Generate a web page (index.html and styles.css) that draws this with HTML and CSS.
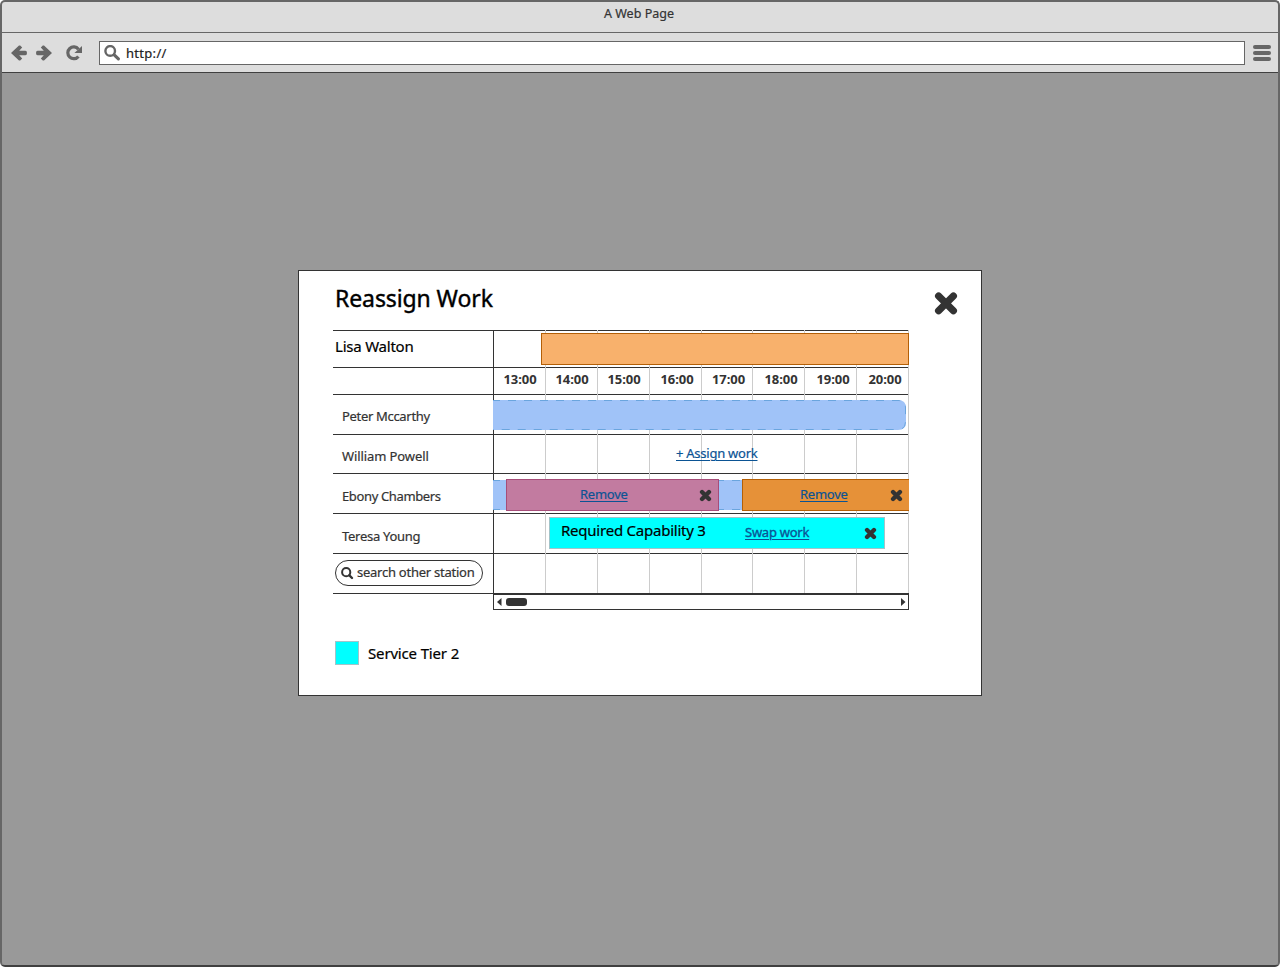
FILE: index.html
```html
<!DOCTYPE html>
<html lang="en">
<head>
<meta charset="utf-8">
<title>A Web Page</title>
<link rel="stylesheet" href="styles.css">
</head>
<body>
<svg class="defs" width="0" height="0">
  <symbol id="cross" viewBox="0 0 24 24"><path d="M5.6 5.6L18.4 18.4M18.4 5.6L5.6 18.4" fill="none" stroke="#333" stroke-width="8" stroke-linecap="round"/></symbol>
  <symbol id="arrow" viewBox="0 0 16 16"><path d="M8 .4L0 8L8 15.6H9.2L11.2 13.4L8.2 10.3H14.4Q16 10.3 16 8T14.4 5.7H8.2L11.2 2.6L9.2 .4Z" fill="#666"/></symbol>
</svg>
<div class="window">
  <header class="titlebar"><span>A Web Page</span></header>
  <nav class="toolbar">
    <svg class="back" width="16" height="16"><use href="#arrow"/></svg>
    <svg class="forward" width="16" height="16"><use href="#arrow"/></svg>
    <svg class="reload" width="18" height="16" viewBox="0 0 18 16"><path d="M13.4 4.2A5.9 5.9 0 1 0 13.4 11.4" fill="none" stroke="#666" stroke-width="3.2"/><path d="M17 1V8H9.4Z" fill="#666"/></svg>
    <div class="address">
      <svg width="17" height="17" viewBox="0 0 17 17" fill="none" stroke="#666"><circle cx="6.2" cy="5.9" r="4.8" stroke-width="2.4"/><path d="M10.2 9.8L14.4 13.8" stroke-width="3.2" stroke-linecap="round"/></svg>
      <span>http://</span>
    </div>
    <div class="menu"><i></i><i></i><i></i></div>
  </nav>
  <main class="page">
    <section class="dialog">
      <div class="dialog-head">
        <h1>Reassign Work</h1>
        <svg class="close" width="24" height="24" viewBox="0 0 24 24"><path d="M4.6 5L19.4 19.8M19.4 5L4.6 19.8" stroke="#333" stroke-width="7.2" stroke-linecap="round"/></svg>
      </div>
      <div class="schedule">
        <div class="row r-lead">
          <div class="name lead">Lisa Walton</div>
          <div class="track"><i></i><i></i><i></i><i></i><i></i><i></i><i></i><i></i>
            <div class="bar lead-bar"></div></div>
        </div>
        <div class="row r-hours">
          <div class="name"></div>
          <div class="track hours"><i>13:00</i><i>14:00</i><i>15:00</i><i>16:00</i><i>17:00</i><i>18:00</i><i>19:00</i><i>20:00</i></div>
        </div>
        <div class="row r-a">
          <div class="name n1">Peter Mccarthy</div>
          <div class="track"><i></i><i></i><i></i><i></i><i></i><i></i><i></i><i></i>
            <svg class="free free-full" width="413" height="30"><path d="M0 0H405Q413 0 413 8V22Q413 30 405 30H0Z" fill="#a0c3f8"/><path d="M-1 .5H405Q412.5 .5 412.5 8V22Q412.5 29.5 405 29.5H-2" fill="none" stroke="#6aa5de" stroke-dasharray="8 8"/></svg></div>
        </div>
        <div class="row r-b">
          <div class="name n2">William Powell</div>
          <div class="track"><i></i><i></i><i></i><i></i><i></i><i></i><i></i><i></i>
            <a class="assign">+ Assign work</a></div>
        </div>
        <div class="row r-a">
          <div class="name n3">Ebony Chambers</div>
          <div class="track"><i></i><i></i><i></i><i></i><i></i><i></i><i></i><i></i>
            <svg class="free free-part" width="250" height="30"><path d="M0 0H250V30H0Z" fill="#a0c3f8"/><path d="M-1 .5H250M-1 29.5H250" stroke="#6aa5de" stroke-dasharray="8 8"/></svg>
            <div class="bar pink"><a>Remove</a><svg class="x" width="13" height="13"><use href="#cross"/></svg></div>
            <div class="bar orange"><a>Remove</a><svg class="x" width="13" height="13"><use href="#cross"/></svg></div></div>
        </div>
        <div class="row r-a">
          <div class="name n4">Teresa Young</div>
          <div class="track"><i></i><i></i><i></i><i></i><i></i><i></i><i></i><i></i>
            <div class="bar cyan"><b>Required Capability 3</b><a>Swap work</a><svg class="x" width="13" height="13"><use href="#cross"/></svg></div></div>
        </div>
        <div class="row r-a r-last">
          <div class="name"><div class="search"><svg width="13" height="13" viewBox="0 0 13 13" fill="none" stroke="#333"><circle cx="5.2" cy="5.2" r="4.1" stroke-width="2"/><path d="M8.4 8.4L11 11" stroke-width="2.4" stroke-linecap="round"/></svg><span>search other station</span></div></div>
          <div class="track"><i></i><i></i><i></i><i></i><i></i><i></i><i></i><i></i></div>
        </div>
      </div>
      <div class="scrollbar">
        <svg width="5" height="8"><path d="M4.5 0V8L0 4Z" fill="#333"/></svg>
        <div class="thumb"></div>
        <svg class="right" width="5" height="8"><path d="M0 0V8L4.5 4Z" fill="#333"/></svg>
      </div>
      <div class="legend"><i></i><span>Service Tier 2</span></div>
    </section>
  </main>
</div>
</body>
</html>
```
FILE: styles.css
```css
* { box-sizing: border-box; }
body { margin: 0; background: #fff; font: 13px/18px "Noto Sans", "Open Sans", sans-serif; color: #333; -webkit-text-stroke: .2px; }
i { font-style: normal; }
svg { display: block; flex: none; }
.defs { position: absolute; }
.window { height: 967px; display: flex; flex-direction: column; background: #ddd; border: 2px solid #666; border-bottom-color: #404040; border-radius: 5px; overflow: hidden; }
.titlebar { height: 31px; border-bottom: 1px solid #666; text-align: center; line-height: 23px; font-size: 12.5px; padding-right: 2px; letter-spacing: .03px; color: #333; }
.toolbar { height: 39px; display: flex; align-items: center; padding: 0 7px 0 9px; flex: none; }
.forward { transform: scaleX(-1); margin-left: 9px; }
.reload { margin-left: 13px; }
.address { flex: 1; height: 24px; margin: 1px 8px 0 16px; border: 1px solid #666; background: #fff; display: flex; align-items: center; padding-left: 4px; gap: 5px; color: #222; letter-spacing: .3px; }
.menu { width: 18px; display: grid; gap: 2px; margin-top: 1px; }
.menu i { height: 4px; border-radius: 2px; background: #666; }
.page { flex: 1; background: #999; margin: 0 -2px -2px; border: 2px solid #404040; border-top-width: 1px; border-radius: 0 0 5px 5px; padding-top: 197px; }
.dialog { width: 684px; height: 426px; margin: 0 auto; border: 1px solid #333; background: #fff; padding-left: 34px; }
.dialog-head { height: 59px; display: flex; justify-content: space-between; padding: 20px 23px 0 2px; }
h1 { margin: -8px 0 0; font-size: 23px; line-height: 30px; font-weight: 400; letter-spacing: -.1px; color: #000; -webkit-text-stroke: .4px; }
.schedule { width: 576px; border-bottom: 1px solid #333; }
.row { display: grid; grid-template-columns: 160px 416px; height: 40px; }
.r-lead { height: 37px; }
.r-hours { height: 27px; }
.r-b { height: 39px; }
.name { border-top: 1px solid #333; padding: 12px 0 0 9px; white-space: nowrap; }
.lead { padding: 6px 0 0 2px; font-size: 15px; letter-spacing: -.22px; color: #000; }
.n1 { letter-spacing: -.32px; }
.n2 { letter-spacing: -.1px; }
.n3 { letter-spacing: -.36px; padding-top: 13px; }
.n4 { letter-spacing: -.28px; padding-top: 13px; }
.r-last .name { padding: 6px 0 0 2px; }
.track { position: relative; border-left: 1px solid #333; display: grid; grid-template-columns: repeat(4, 52px) 51px repeat(3, 52px); background: linear-gradient(#333, #333) 0 0 / 100% 1px no-repeat; }
.track > i { border-right: 1px solid #ccc; }
.hours i { font-weight: 700; text-align: center; padding: 3px 0 0 1px; letter-spacing: -.05px; -webkit-text-stroke: 0; }
.hours i:nth-child(n+4) { padding-left: 3px; }
.hours i:nth-child(n+6) { padding-left: 5px; }
.bar { position: absolute; height: 32px; border: 1px solid; display: flex; align-items: center; }
.bar a { margin-top: -2px; }
.lead-bar { left: 47px; top: 3px; width: 368px; background: #f8b16c; border-color: #b45f06; }
.free { position: absolute; left: -1px; top: 6px; }
.free-part { top: 7px; }
a { color: #0b5394; text-decoration: underline; text-underline-offset: 2px; text-decoration-thickness: 1px; white-space: nowrap; letter-spacing: -.25px; }
.assign { position: absolute; left: 182px; top: 10px; }
.pink { left: 12px; top: 6px; width: 213px; background: #c27ba0; border-color: #a64d79; padding: 0 6px 0 73px; }
.orange { left: 248px; top: 6px; width: 167px; background: #e69138; border-color: #b45f06; border-right: 0; padding: 0 6px 0 57px; }
.cyan { left: 55px; top: 4px; width: 336px; background: #0ff; border-color: #a2c4c9; padding: 0 7px 0 11px; }
.cyan a { -webkit-text-stroke: .35px; }
.cyan b { font-weight: 400; font-size: 15px; letter-spacing: -.23px; color: #000; width: 184px; margin-top: -6px; white-space: nowrap; }
.x { margin-left: auto; margin-top: 1px; }
.search { width: 148px; height: 26px; border: 1px solid #333; border-radius: 13px; display: flex; align-items: center; padding-left: 5px; gap: 3px; white-space: nowrap; letter-spacing: -.25px; }
.search span { margin-top: -2px; }
.scrollbar { width: 416px; height: 16px; margin-left: 160px; border: 1px solid #333; display: flex; align-items: center; padding: 0 2px 0 3px; gap: 4px; }
.thumb { width: 21px; height: 8px; border-radius: 3px; background: #333; }
.right { margin-left: auto; }
.legend { display: flex; align-items: center; gap: 9px; margin: 31px 0 0 2px; color: #000; font-size: 15px; letter-spacing: -.16px; }
.legend i { width: 24px; height: 24px; background: #0ff; border: 1px solid #a2c4c9; }
```
